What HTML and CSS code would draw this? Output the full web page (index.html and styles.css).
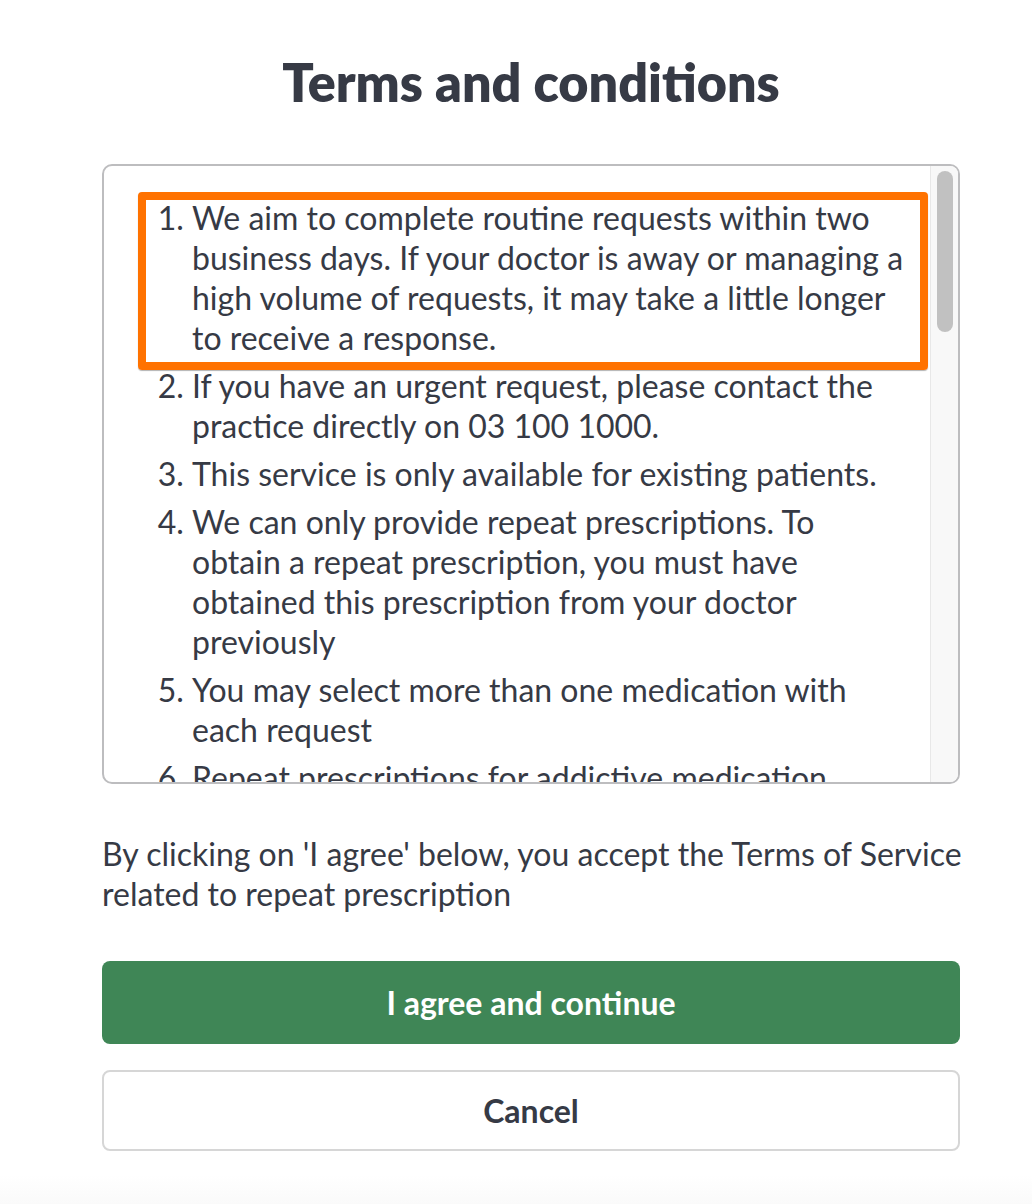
FILE: index.html
```html
<!DOCTYPE html>
<html lang="en">
<head>
  <meta charset="UTF-8">
  <meta name="viewport" content="width=device-width, initial-scale=1.0">
  <title>Terms and conditions</title>
  <link rel="stylesheet" href="styles.css">
</head>
<body>

<div class="page">
  <h1>Terms and conditions</h1>

  <!-- Scrollable terms list -->
  <div class="terms-box">
    <div class="terms-scroll">
      <ol class="terms-list">
        <li class="highlight">We aim to complete routine requests within two business days. If your doctor is away or managing a high volume of requests, it may take a little longer to receive a response.</li>
        <li>If you have an urgent request, please contact the practice directly on 03 100 1000.</li>
        <li>This service is only available for existing patients.</li>
        <li>We can only provide repeat prescriptions. To obtain a repeat prescription, you must have obtained this prescription from your doctor previously</li>
        <li>You may select more than one medication with each request</li>
        <li>Repeat prescriptions for addictive medication cannot be provided through this service</li>
      </ol>
    </div>
    <div class="scrollbar">
      <div class="scrollbar-thumb"></div>
    </div>
  </div>

  <p class="accept-note">By clicking on 'I agree' below, you accept the Terms of Service related to repeat prescription</p>

  <button class="btn btn-primary">I agree and continue</button>
  <button class="btn btn-secondary">Cancel</button>
</div>

<div class="page-fade"></div>

</body>
</html>
```

FILE: styles.css
```css
/* Basic Styling */
html, body {
  margin: 0;
  background: #fff;
}
body {
  font-family: Lato, "Open Sans", sans-serif;
  color: #363a45;
}
.page {
  width: 858px;
  margin-left: 102px;
}
h1 {
  margin: 50px 0 50px;
  font-size: 52px;
  line-height: 64px;
  font-weight: 800;
  text-align: center;
}
.terms-box {
  display: flex;
  height: 616px;
  border: 2px solid #bdbdbf;
  border-radius: 10px;
  overflow: hidden;
  font-size: 32px;
  line-height: 40px;
}
.terms-scroll {
  flex: 1;
  overflow: hidden;
}
.scrollbar {
  width: 27px;
  background: #f8f8f8;
  border-left: 1px solid #e8e8e8;
}
.scrollbar-thumb {
  width: 16px;
  height: 161px;
  margin: 5px 0 0 6px;
  background: #c1c1c1;
  border-radius: 8px;
}
.terms-list {
  margin: 0;
  padding: 32px 24px 0 88px;
}
.terms-list li {
  margin-bottom: 8px;
}
.terms-list li.highlight {
  position: relative;
}
/* annotation frame around the first term */
.terms-list li.highlight::before {
  content: "";
  position: absolute;
  left: -54px;
  right: -22px;
  top: -6px;
  bottom: -12px;
  border: 8px solid #ff7200;
  border-radius: 4px;
  box-shadow: 0 1px 1px rgba(0, 0, 0, 0.3);
}
.accept-note {
  margin: 50px -16px 47px 0;
  font-size: 32px;
  line-height: 40px;
}
.btn {
  display: block;
  width: 100%;
  font-family: inherit;
  font-size: 32px;
  font-weight: 700;
  border-radius: 8px;
  cursor: pointer;
}
.btn-primary {
  height: 83px;
  border: none;
  background-color: #3f8656;
  color: #fff;
}
.btn-secondary {
  height: 81px;
  margin-top: 26px;
  border: 2px solid #d6d6d6;
  background-color: #fff;
  color: #363a45;
}
.page-fade {
  height: 60px;
  margin-top: 24px;
  background: linear-gradient(#fff, #f5f5f5);
}
```
